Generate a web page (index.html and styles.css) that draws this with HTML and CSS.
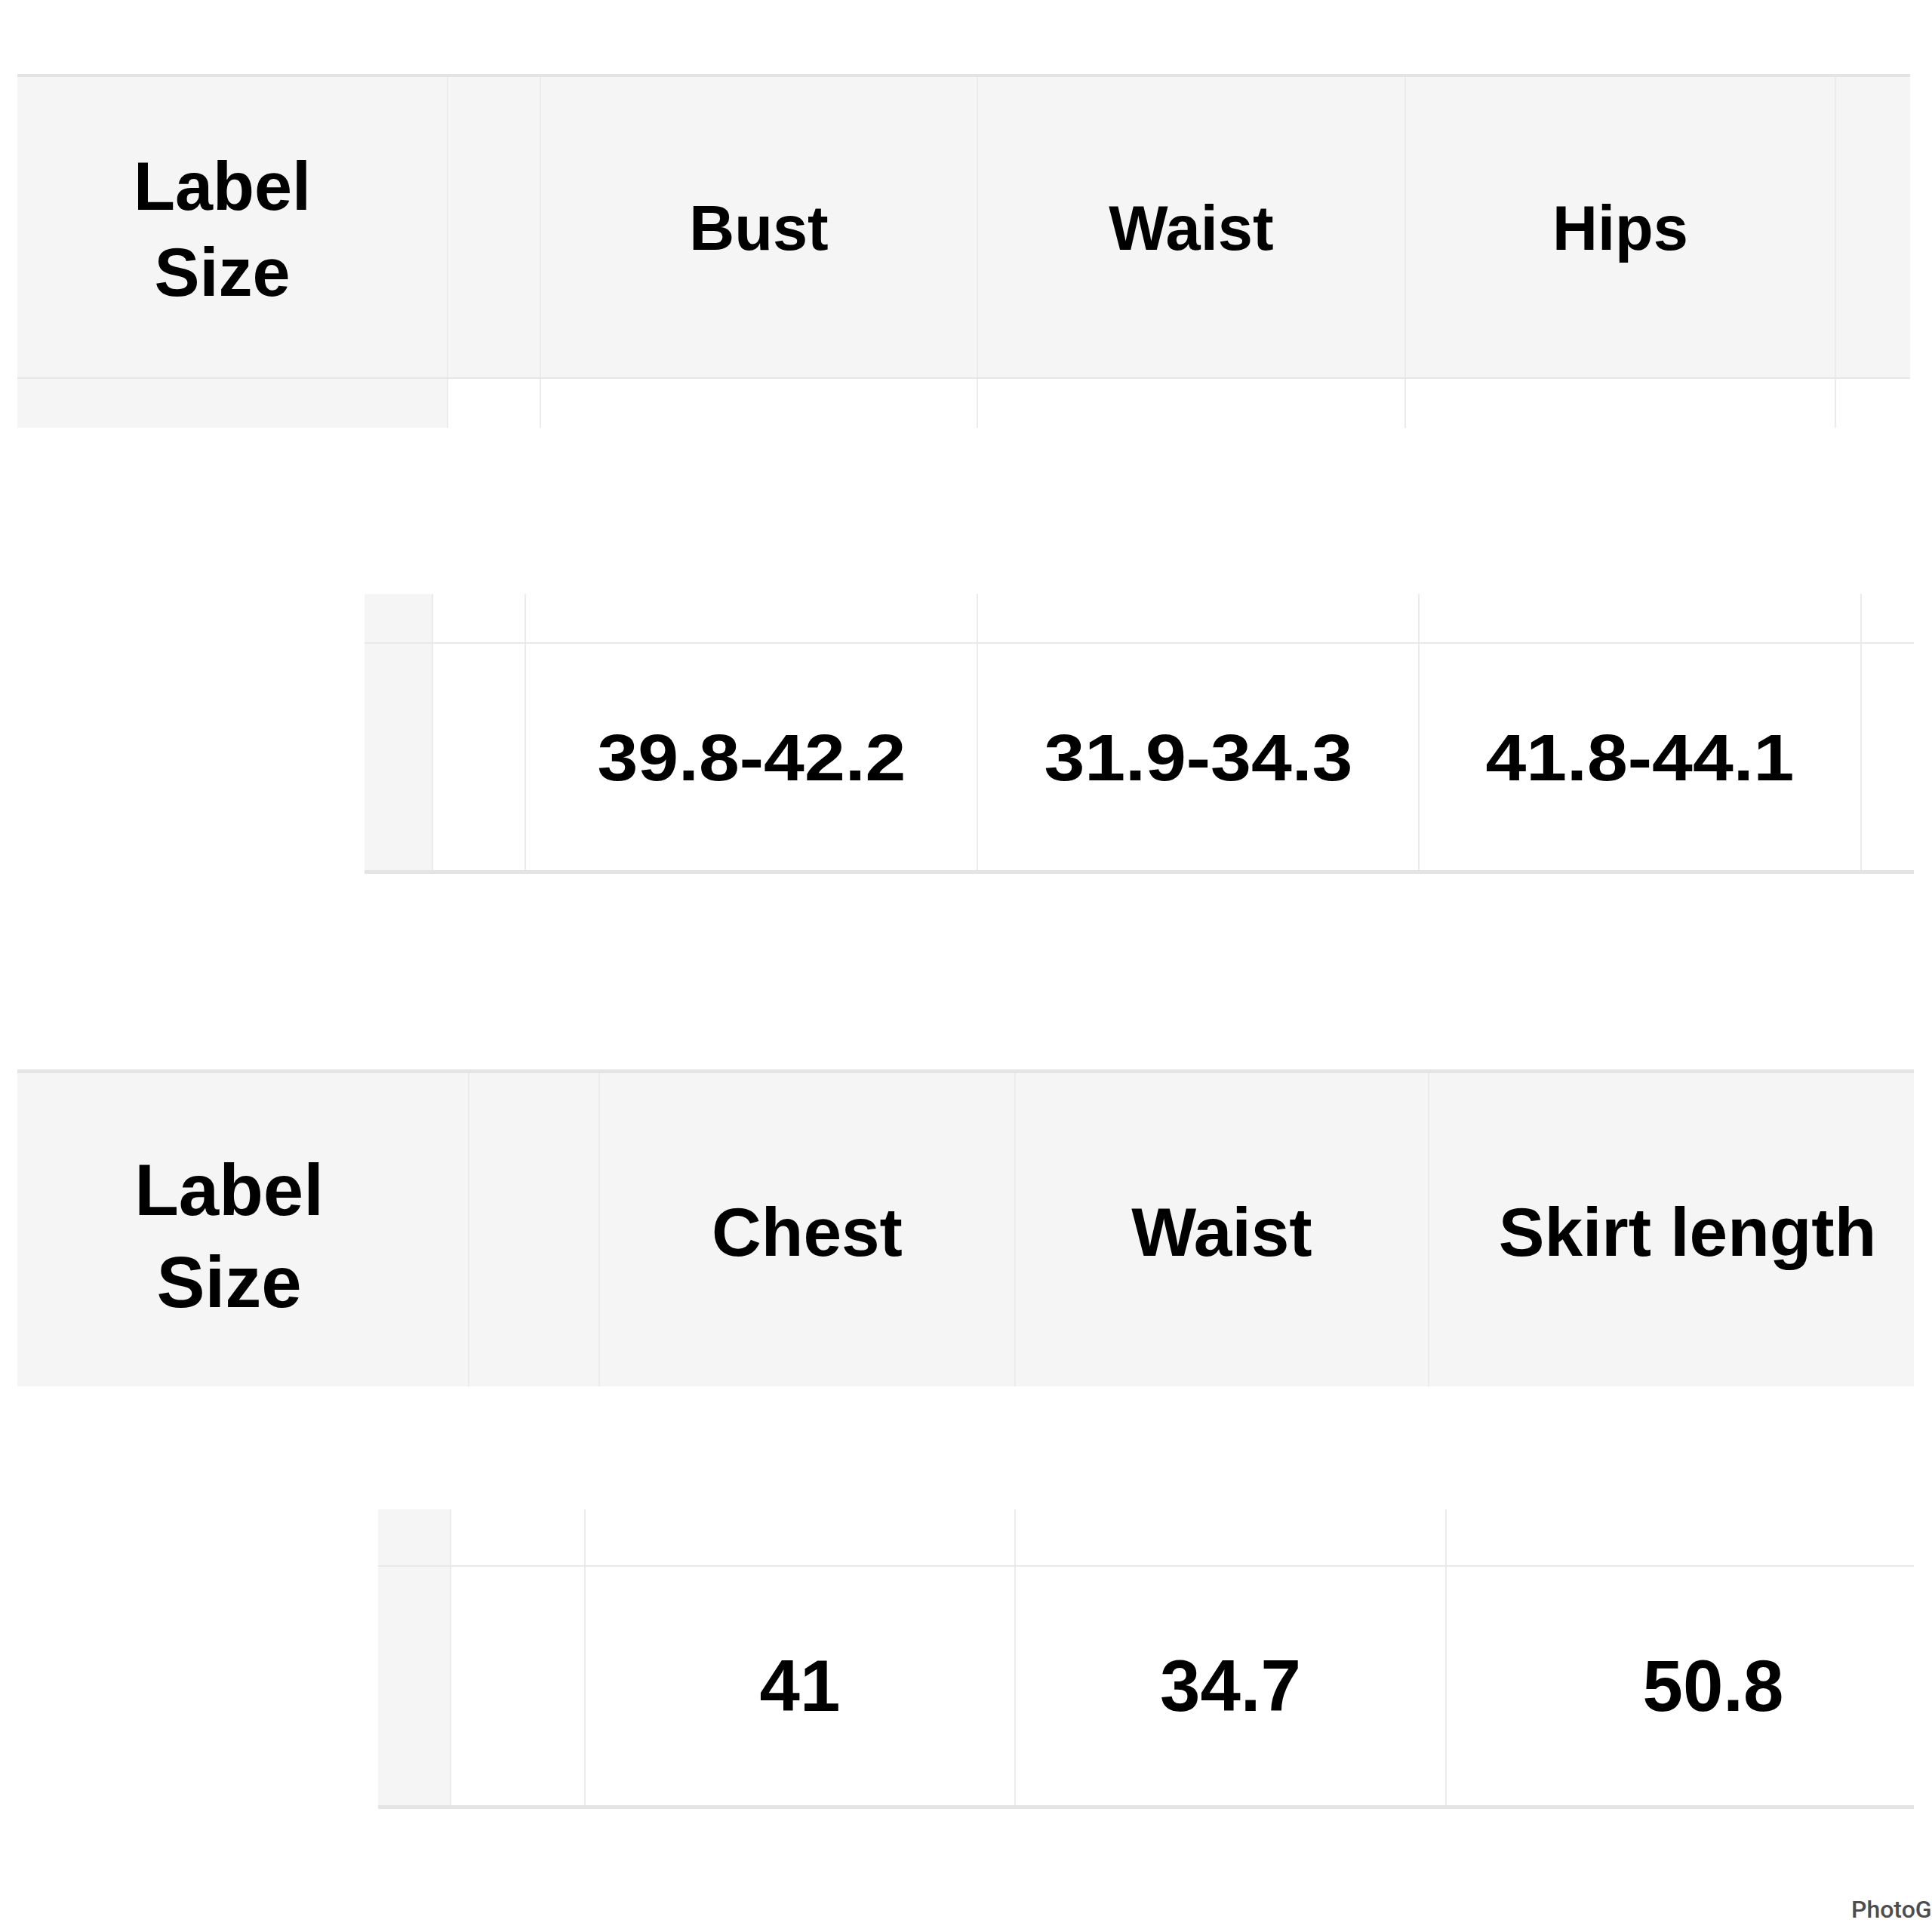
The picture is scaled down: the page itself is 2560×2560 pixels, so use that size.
FILE: index.html
```html
<!DOCTYPE html>
<html lang="en">
<head>
<meta charset="utf-8">
<title>Size chart</title>
<link rel="stylesheet" href="styles.css">
</head>
<body>
<div class="sheet">

  <section class="panel p1">
    <div class="row head">
      <div class="cell"><span class="lbl">Label<br>Size</span></div>
      <div class="cell"></div>
      <div class="cell"><span class="th">Bust</span></div>
      <div class="cell"><span class="th">Waist</span></div>
      <div class="cell"><span class="th">Hips</span></div>
      <div class="cell"></div>
    </div>
    <div class="row strip">
      <div class="cell side"></div>
      <div class="cell"></div>
      <div class="cell"></div>
      <div class="cell"></div>
      <div class="cell"></div>
      <div class="cell"></div>
    </div>
  </section>

  <section class="panel p2">
    <div class="row strip">
      <div class="cell side"></div>
      <div class="cell"></div>
      <div class="cell"></div>
      <div class="cell"></div>
      <div class="cell"></div>
      <div class="cell"></div>
    </div>
    <div class="row data">
      <div class="cell side"></div>
      <div class="cell"></div>
      <div class="cell"><span class="td">39.8-42.2</span></div>
      <div class="cell"><span class="td">31.9-34.3</span></div>
      <div class="cell"><span class="td">41.8-44.1</span></div>
      <div class="cell"></div>
    </div>
  </section>

  <section class="panel p3">
    <div class="row head">
      <div class="cell"><span class="lbl">Label<br>Size</span></div>
      <div class="cell"></div>
      <div class="cell"><span class="th">Chest</span></div>
      <div class="cell"><span class="th">Waist</span></div>
      <div class="cell"><span class="th">Skirt length</span></div>
    </div>
  </section>

  <section class="panel p4">
    <div class="row strip">
      <div class="cell side"></div>
      <div class="cell"></div>
      <div class="cell"></div>
      <div class="cell"></div>
      <div class="cell"></div>
    </div>
    <div class="row data">
      <div class="cell side"></div>
      <div class="cell"></div>
      <div class="cell"><span class="td">41</span></div>
      <div class="cell"><span class="td">34.7</span></div>
      <div class="cell"><span class="td">50.8</span></div>
    </div>
  </section>

  <div class="wm">PhotoGrid</div>
</div>
</body>
</html>
```

FILE: styles.css
```css
html, body {
  margin: 0;
  padding: 0;
  background: #ffffff;
  overflow: hidden;
}

.sheet {
  width: 2560px;
  height: 2560px;
  overflow: hidden;
  display: flex;
  flex-direction: column;
  align-items: flex-start;
  background: #ffffff;
  font-family: "Liberation Sans", Arial, sans-serif;
  color: #000000;
}

.panel {
  overflow: hidden;
  flex: none;
}

.row {
  display: grid;
}

.cell {
  display: flex;
  align-items: center;
  justify-content: center;
  border-right: 2px solid #ebebeb;
  min-width: 0;
  white-space: nowrap;
}

.row .cell:last-child {
  border-right: 0;
}

.head {
  background: #f5f5f5;
}

.side {
  background: #f5f5f5;
}

.strip {
  border-bottom: 2px solid #e9e9e9;
}

.lbl, .th, .td {
  font-weight: 700;
  text-align: center;
}

/* ---------- table 1, header ---------- */
.p1 {
  margin: 98px 0 0 23px;
  width: 2508px;
  border-top: 4px solid #e4e4e4;
}
.p1 .row {
  grid-template-columns: 571px 123px 579px 567px 570px 98px;
}
.p1 .head {
  height: 398px;
  border-bottom: 2px solid #e6e6e6;
}
.p1 .strip {
  height: 65px;
  border-bottom: 0;
}
.p1 .lbl {
  font-size: 90px;
  line-height: 114px;
  padding: 6px 26px 0 0;
}
.p1 .th {
  font-size: 83px;
  line-height: 1;
  padding-top: 2px;
}

/* ---------- table 1, data ---------- */
.p2 {
  margin: 220px 0 0 483px;
  width: 2053px;
  border-bottom: 5px solid #e4e4e4;
}
.p2 .row {
  grid-template-columns: 91px 123px 599px 585px 586px 69px;
}
.p2 .strip {
  height: 64px;
}
.p2 .data {
  height: 300px;
}
.p2 .td {
  display: inline-block;
  font-size: 88px;
  line-height: 1;
  padding-top: 2px;
  transform: scaleX(1.1);
}

/* ---------- table 2, header ---------- */
.p3 {
  margin: 259px 0 0 23px;
  width: 2513px;
  border-top: 5px solid #e4e4e4;
}
.p3 .row {
  grid-template-columns: 599px 173px 551px 548px 684px;
}
.p3 .head {
  height: 415px;
}
.p3 .lbl {
  font-size: 96px;
  line-height: 122px;
  padding: 16px 36px 0 0;
}
.p3 .th {
  font-size: 91px;
  line-height: 1;
  padding-top: 5px;
}

/* ---------- table 2, data ---------- */
.p4 {
  margin: 163px 0 0 501px;
  width: 2035px;
  border-bottom: 5px solid #e4e4e4;
}
.p4 .row {
  grid-template-columns: 97px 178px 570px 571px 706px;
}
.p4 .strip {
  height: 74px;
}
.p4 .data {
  height: 316px;
}
.p4 .td {
  font-size: 96px;
  line-height: 1;
  padding-top: 0;
}

/* ---------- watermark ---------- */
.wm {
  margin: 117px 0 0 2453px;
  font-family: Roboto, "Liberation Sans", sans-serif;
  font-weight: 500;
  font-size: 32px;
  line-height: 32px;
  color: #4d4d4d;
  white-space: nowrap;
}
```
